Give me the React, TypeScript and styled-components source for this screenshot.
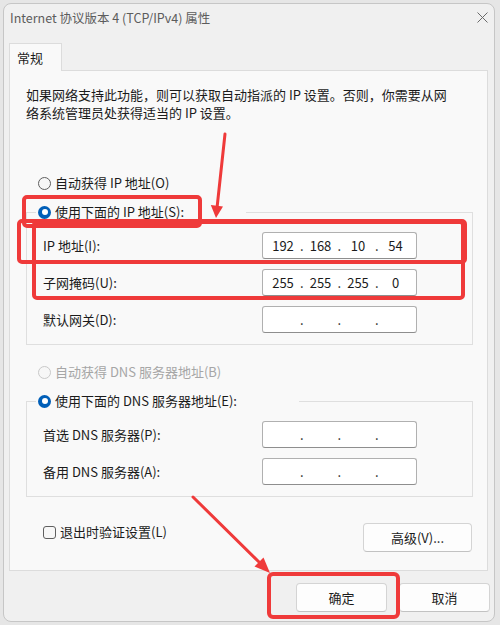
import React from "react";
import styled, { createGlobalStyle } from "styled-components";

const GlobalStyle = createGlobalStyle`
  html, body {
    margin: 0;
    padding: 0;
  }
  body {
    background: #e6e6e6;
    font-family: "Noto Sans CJK SC", "Noto Sans", sans-serif;
    color: #1b1b1b;
  }
`;

const Page = styled.div`
  position: relative;
  width: 500px;
  height: 625px;
  padding: 3px 5px 0 3px;
  box-sizing: border-box;
  overflow: hidden;
`;

const Window = styled.div`
  width: 492px;
  height: 619px;
  box-sizing: border-box;
  border: 1px solid #c6c6c6;
  border-radius: 8px;
  background: #f0f0f0;
  display: flex;
  flex-direction: column;
`;

const TitleBar = styled.div`
  height: 27px;
  display: flex;
  align-items: center;
  justify-content: space-between;
  padding: 0 6px;
  font-size: 12.5px;
  color: #5c5c5c;
`;

const Body = styled.div`
  padding: 12px 6px 0 5px;
  display: flex;
  flex-direction: column;
`;

const Tabs = styled.div`
  display: flex;
`;

const Tab = styled.div`
  width: 53px;
  height: 28px;
  box-sizing: border-box;
  border: 1px solid #dcdcdc;
  border-bottom: none;
  background: #f9f9f9;
  font-size: 13px;
  padding-left: 7px;
  display: flex;
  align-items: center;
  margin-bottom: -1px;
  position: relative;
  z-index: 1;
`;

const Panel = styled.div`
  height: 501px;
  box-sizing: border-box;
  border: 1px solid #dcdcdc;
  background: #f9f9f9;
  padding: 15px 14px 0 16px;
  display: flex;
  flex-direction: column;
`;

const Description = styled.p`
  margin: 0;
  font-size: 13px;
  line-height: 18px;
  white-space: nowrap;
`;

const RadioLine = styled.label<{ $disabled?: boolean; $top?: number }>`
  display: flex;
  align-items: center;
  gap: 4px;
  font-size: 13px;
  line-height: 18px;
  margin-top: ${(p) => p.$top ?? 0}px;
  margin-left: ${(p) => (p.$top === undefined ? 0 : 12)}px;
  color: ${(p) => (p.$disabled ? "#a6a6a6" : "#1b1b1b")};
`;

const RadioDot = styled.span<{ $checked?: boolean; $disabled?: boolean }>`
  width: 13px;
  height: 13px;
  box-sizing: border-box;
  border-radius: 50%;
  position: relative;
  flex-shrink: 0;
  background: ${(p) => (p.$checked ? "#005fb8" : "#f7f7f7")};
  border: ${(p) =>
    p.$checked ? "none" : p.$disabled ? "1px solid #c9c9c9" : "1px solid #5f5f5f"};
  &::after {
    content: "";
    display: ${(p) => (p.$checked ? "block" : "none")};
    position: absolute;
    left: 3.5px;
    top: 3.5px;
    width: 6px;
    height: 6px;
    border-radius: 50%;
    background: #fff;
  }
`;

const Group = styled.fieldset<{ $top: number }>`
  margin: ${(p) => p.$top}px 0 0 0;
  padding: 11px 0 11px 16px;
  border: 1px solid #dfdfdf;
  min-width: 0;
  display: flex;
  flex-direction: column;
  gap: 10px;
`;

const Legend = styled.legend`
  margin-left: -7px;
  padding: 0 62px 0 2px;
`;

const FieldRow = styled.div`
  display: flex;
  align-items: center;
  height: 27px;
`;

const FieldLabel = styled.span`
  width: 219px;
  font-size: 13px;
`;

const IpBox = styled.div`
  width: 155px;
  height: 27px;
  box-sizing: border-box;
  background: #fff;
  border: 1px solid #b0b0b0;
  border-bottom-color: #8e8e8e;
  border-radius: 3px;
  padding-left: 5px;
  display: grid;
  grid-template-columns: 30px 7.5px 30px 7.5px 30px 7.5px 30px;
  align-items: center;
  font-size: 13px;
  text-align: center;
  color: #1b1b1b;
`;

const Octet = styled.span``;

const Dot = styled.span`
  font-size: 13px;
`;

const Footer = styled.div`
  margin-top: 26px;
  display: flex;
  justify-content: space-between;
  align-items: flex-start;
  padding-left: 17px;
  padding-right: 1px;
`;

const CheckLine = styled.label`
  display: flex;
  align-items: center;
  gap: 4px;
  font-size: 13px;
  line-height: 18px;
`;

const CheckBox = styled.span`
  width: 13px;
  height: 13px;
  box-sizing: border-box;
  border: 1px solid #5f5f5f;
  border-radius: 3px;
  background: #f7f7f7;
`;

const Button = styled.button<{ $width: number }>`
  width: ${(p) => p.$width}px;
  height: 29px;
  box-sizing: border-box;
  background: #fdfdfd;
  border: 1px solid #d4d4d4;
  border-bottom-color: #c2c2c2;
  border-radius: 4px;
  font-family: inherit;
  font-size: 13px;
  color: #1b1b1b;
  padding: 0;
`;

const ButtonBar = styled.div`
  margin: 12px -2px 0 0;
  display: flex;
  justify-content: flex-end;
  gap: 12px;
`;

const Overlay = styled.svg`
  position: absolute;
  left: 0;
  top: 0;
  pointer-events: none;
`;

const IpField = ({ value }: { value?: string[] }) => {
  const parts = value ?? ["", "", "", ""];
  return (
    <IpBox>
      {parts.map((p, i) => (
        <React.Fragment key={i}>
          <Octet>{p}</Octet>
          {i < 3 && <Dot>.</Dot>}
        </React.Fragment>
      ))}
    </IpBox>
  );
};

const CloseIcon = () => (
  <svg width="11" height="11" viewBox="0 0 11 11">
    <path d="M0.5 0.5 L10.5 10.5 M10.5 0.5 L0.5 10.5" stroke="#6a6a6a" strokeWidth="1" />
  </svg>
);

const RED = "#ef3a3a";

export default function App() {
  return (
    <Page>
      <GlobalStyle />
      <Window>
        <TitleBar>
          <span>Internet 协议版本 4 (TCP/IPv4) 属性</span>
          <CloseIcon />
        </TitleBar>
        <Body>
          <Tabs>
            <Tab>常规</Tab>
          </Tabs>
          <Panel>
            <Description>
              如果网络支持此功能，则可以获取自动指派的 IP 设置。否则，你需要从网
              <br />
              络系统管理员处获得适当的 IP 设置。
            </Description>

            <RadioLine $top={52}>
              <RadioDot />
              自动获得 IP 地址(O)
            </RadioLine>
            <Group $top={11}>
              <Legend>
                <RadioLine>
                  <RadioDot $checked />
                  使用下面的 IP 地址(S):
                </RadioLine>
              </Legend>
              <FieldRow>
                <FieldLabel>IP 地址(I):</FieldLabel>
                <IpField value={["192", "168", "10", "54"]} />
              </FieldRow>
              <FieldRow>
                <FieldLabel>子网掩码(U):</FieldLabel>
                <IpField value={["255", "255", "255", "0"]} />
              </FieldRow>
              <FieldRow>
                <FieldLabel>默认网关(D):</FieldLabel>
                <IpField />
              </FieldRow>
            </Group>

            <RadioLine $top={18} $disabled>
              <RadioDot $disabled />
              自动获得 DNS 服务器地址(B)
            </RadioLine>
            <Group $top={11}>
              <Legend>
                <RadioLine>
                  <RadioDot $checked />
                  使用下面的 DNS 服务器地址(E):
                </RadioLine>
              </Legend>
              <FieldRow>
                <FieldLabel>首选 DNS 服务器(P):</FieldLabel>
                <IpField />
              </FieldRow>
              <FieldRow>
                <FieldLabel>备用 DNS 服务器(A):</FieldLabel>
                <IpField />
              </FieldRow>
            </Group>

            <Footer>
              <CheckLine>
                <CheckBox />
                退出时验证设置(L)
              </CheckLine>
              <Button $width={109}>高级(V)...</Button>
            </Footer>
          </Panel>
          <ButtonBar>
            <Button $width={91}>确定</Button>
            <Button $width={91}>取消</Button>
          </ButtonBar>
        </Body>
      </Window>

      <Overlay width="500" height="625" viewBox="0 0 500 625">
        <g fill="none" stroke={RED} strokeWidth="4">
          <rect x="24" y="197" width="176" height="29" rx="3" />
          <rect x="19" y="221" width="446" height="41" rx="3" />
          <rect x="34" y="222" width="429" height="76" rx="3" />
          <rect x="269" y="574" width="129" height="43" rx="4" />
        </g>
        <g stroke={RED} strokeLinecap="round">
          <line x1="225" y1="134" x2="217" y2="208" strokeWidth="3" />
          <line x1="193" y1="497" x2="260" y2="563" strokeWidth="3" />
        </g>
        <g fill={RED}>
          <polygon points="216,218 210.8,205 223,206.4" />
          <polygon points="270,573 254.5,566.5 263.5,557.5" />
        </g>
      </Overlay>
    </Page>
  );
}
